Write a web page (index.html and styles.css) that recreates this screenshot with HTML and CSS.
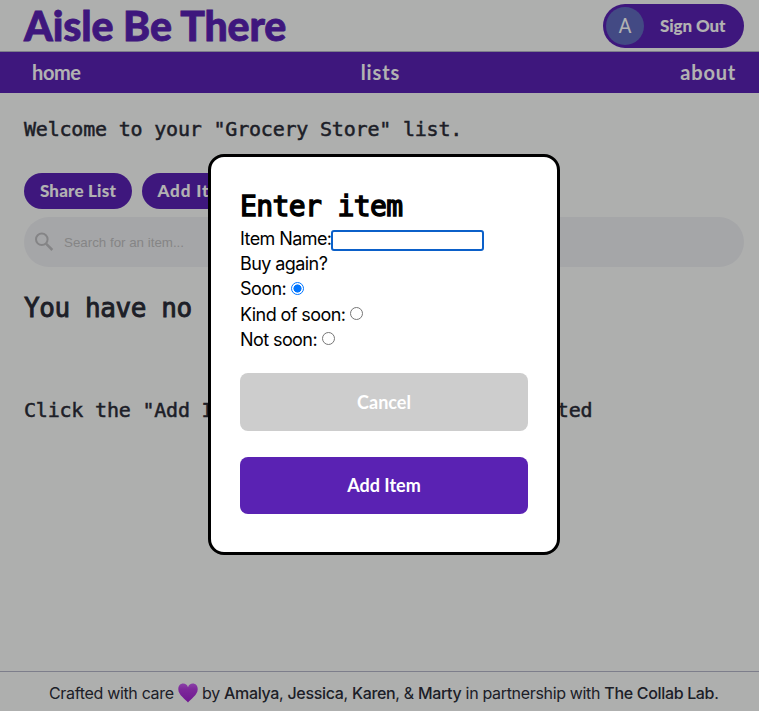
FILE: index.html
```html
<!DOCTYPE html>
<html lang="en">
<head>
<meta charset="utf-8">
<title>Aisle Be There</title>
<link rel="stylesheet" href="styles.css">
</head>
<body>
<div class="app">
  <header class="header">
    <h1 class="brand">Aisle Be There</h1>
    <button class="sign-out"><span class="avatar">A</span><span class="sign-label">Sign Out</span></button>
  </header>
  <nav class="nav"><a class="home">home</a><a class="lists">lists</a><a class="about">about</a></nav>
  <main class="main">
    <p class="welcome">Welcome to your "Grocery Store" list.</p>
    <div class="actions">
      <button class="pill"><span class="share-label">Share List</span></button>
      <button class="pill"><span class="add-label">Add Item</span></button>
    </div>
    <div class="search">
      <svg class="search-icon" width="20" height="20" viewBox="0 0 20 20" fill="none" stroke="#bebec0"><circle cx="7.8" cy="7.3" r="5.8" stroke-width="2"/><path d="M12 11.7L18.3 18" stroke-width="2.5"/></svg>
      <span>Search for an item...</span>
    </div>
    <h2 class="empty">You have no items!</h2>
    <p class="hint">Click the "Add Item" button above to get started</p>
  </main>
  <footer class="footer">
    <span class="credit">Crafted with care <svg class="heart" width="20" height="20" viewBox="0 0 20 20"><defs><linearGradient id="g" x1="0" y1="0" x2="0" y2="1"><stop offset="0" stop-color="#c65cf0"/><stop offset=".3" stop-color="#b33bdd"/><stop offset="1" stop-color="#a020d0"/></linearGradient></defs><path fill="url(#g)" d="M10 19.6C7.6 16 .3 12.2.3 6.2.3 2.7 2.4.6 5.2.6 7.5.6 9.2 2 10 4.2 10.8 2 12.5.6 14.8.6c2.8 0 4.9 2.1 4.9 5.6 0 6-7.3 9.8-9.7 13.4z"/></svg> by <b>Amalya</b>, <b>Jessica</b>, <b>Karen</b>, &amp; <b>Marty</b> in partnership with <b>The Collab Lab</b>.</span>
  </footer>
</div>
<div class="overlay">
  <form class="modal">
    <h2 class="modal-title">Enter item</h2>
    <label class="row"><span class="l-name">Item Name:</span><input class="name-input" type="text"></label>
    <div class="row"><span class="l-buy">Buy again?</span></div>
    <label class="row"><span class="l-soon">Soon:</span><i class="radio checked"></i></label>
    <label class="row"><span class="l-kind">Kind of soon:</span><i class="radio"></i></label>
    <label class="row"><span class="l-not">Not soon:</span><i class="radio"></i></label>
    <button type="button" class="btn cancel"><span>Cancel</span></button>
    <button type="button" class="btn add"><span>Add Item</span></button>
  </form>
</div>
</body>
</html>
```
FILE: styles.css
```css
* { box-sizing: border-box; }
body { margin: 0; font-family: Inter, sans-serif; color: #2b2d38; }
h1, h2, p { margin: 0; white-space: nowrap; }
button { border: 0; padding: 0; font: inherit; }
.app { height: 711px; display: flex; flex-direction: column; background: #f9fbfa; overflow: hidden; }
.header { height: 52px; flex: none; display: flex; align-items: center; justify-content: space-between; padding: 0 15px 0 24px; border-bottom: 1px solid #b3b5c8; }
.brand { font: 900 41px/52px Lato, sans-serif; color: #5a22b3; letter-spacing: -.1px; -webkit-text-stroke: .8px #5a22b3; }
.sign-out { width: 141px; height: 44px; border-radius: 22px; background: #5a22b3; color: #fff; display: flex; align-items: center; padding-left: 3px; }
.avatar { width: 38px; height: 38px; border-radius: 50%; background: #606abe; font: 20px/38px Roboto, sans-serif; }
.sign-label { margin-left: 16px; font: 900 17px/20px Lato, sans-serif; letter-spacing: -.1px; }
.nav { height: 41px; flex: none; background: #5a22b3; color: #fff; display: flex; justify-content: space-between; padding: 0 23px 0 32px; font: bold 20px/41px Lato, sans-serif; }
.home { letter-spacing: -.4px; }
.lists { letter-spacing: .9px; }
.about { letter-spacing: .8px; }
.main { flex: 1; padding: 0 15px 0 24px; }
.welcome, .hint { font: 20px/24px "DejaVu Sans Mono", monospace; letter-spacing: -.2px; -webkit-text-stroke: .5px; }
.welcome { margin-top: 24px; }
.actions { display: flex; gap: 10px; margin-top: 32px; }
.pill { width: 108px; height: 36px; border-radius: 18px; background: #5a22b3; color: #fff; font: 900 17px/36px Lato, sans-serif; white-space: nowrap; letter-spacing: .2px; }
.add-label { letter-spacing: .9px; }
.search { margin-top: 8px; height: 50px; border-radius: 25px; background: #edeef1; display: flex; align-items: center; gap: 10px; padding-left: 10px; color: #bfbfc0; font: 13.33px "Liberation Sans", sans-serif; }
.empty { margin-top: 24px; font: 26px/34px "DejaVu Sans Mono", monospace; letter-spacing: -.4px; -webkit-text-stroke: .9px; }
.hint { margin-top: 73px; }
.footer { height: 40px; flex: none; border-top: 1px solid #b3b5c8; padding-left: 49px; font-size: 16px; line-height: 42px; white-space: nowrap; }
.credit { letter-spacing: -.33px; }
.footer b { font-weight: 500; }
.heart { vertical-align: -4px; }
.overlay { position: absolute; inset: 0; background: rgba(0,0,0,.3); display: flex; justify-content: center; align-items: flex-start; padding: 154px 0 0 9px; }
.modal { width: 352px; height: 401px; border: 3px solid #000; border-radius: 16px; background: #fff; color: #000; padding: 30px 29px 0; font-size: 18px; }
.modal-title { font: 28px/39px "DejaVu Sans Mono", monospace; letter-spacing: -.6px; -webkit-text-stroke: 1.4px; }
.row { display: flex; align-items: center; height: 25.2px; white-space: nowrap; letter-spacing: -.58px; }
.name-input { width: 153px; height: 21px; margin-top: 3px; padding: 0; border: 2px solid #0b60c9; border-radius: 3px; outline: none; }
.radio { width: 13px; height: 13px; border: 1px solid #767676; border-radius: 50%; margin: 0 0 1px 5px; }
.checked { border-color: #0075ff; background: radial-gradient(circle, #0075ff 3.8px, #fff 4.3px); }
.btn { display: block; width: 288px; border-radius: 8px; color: #fff; font: bold 18px Lato, sans-serif; }
.cancel { height: 58px; margin-top: 21px; background: #cdcdcd; }
.add { height: 57px; margin-top: 26px; background: #5a22b3; }
```
